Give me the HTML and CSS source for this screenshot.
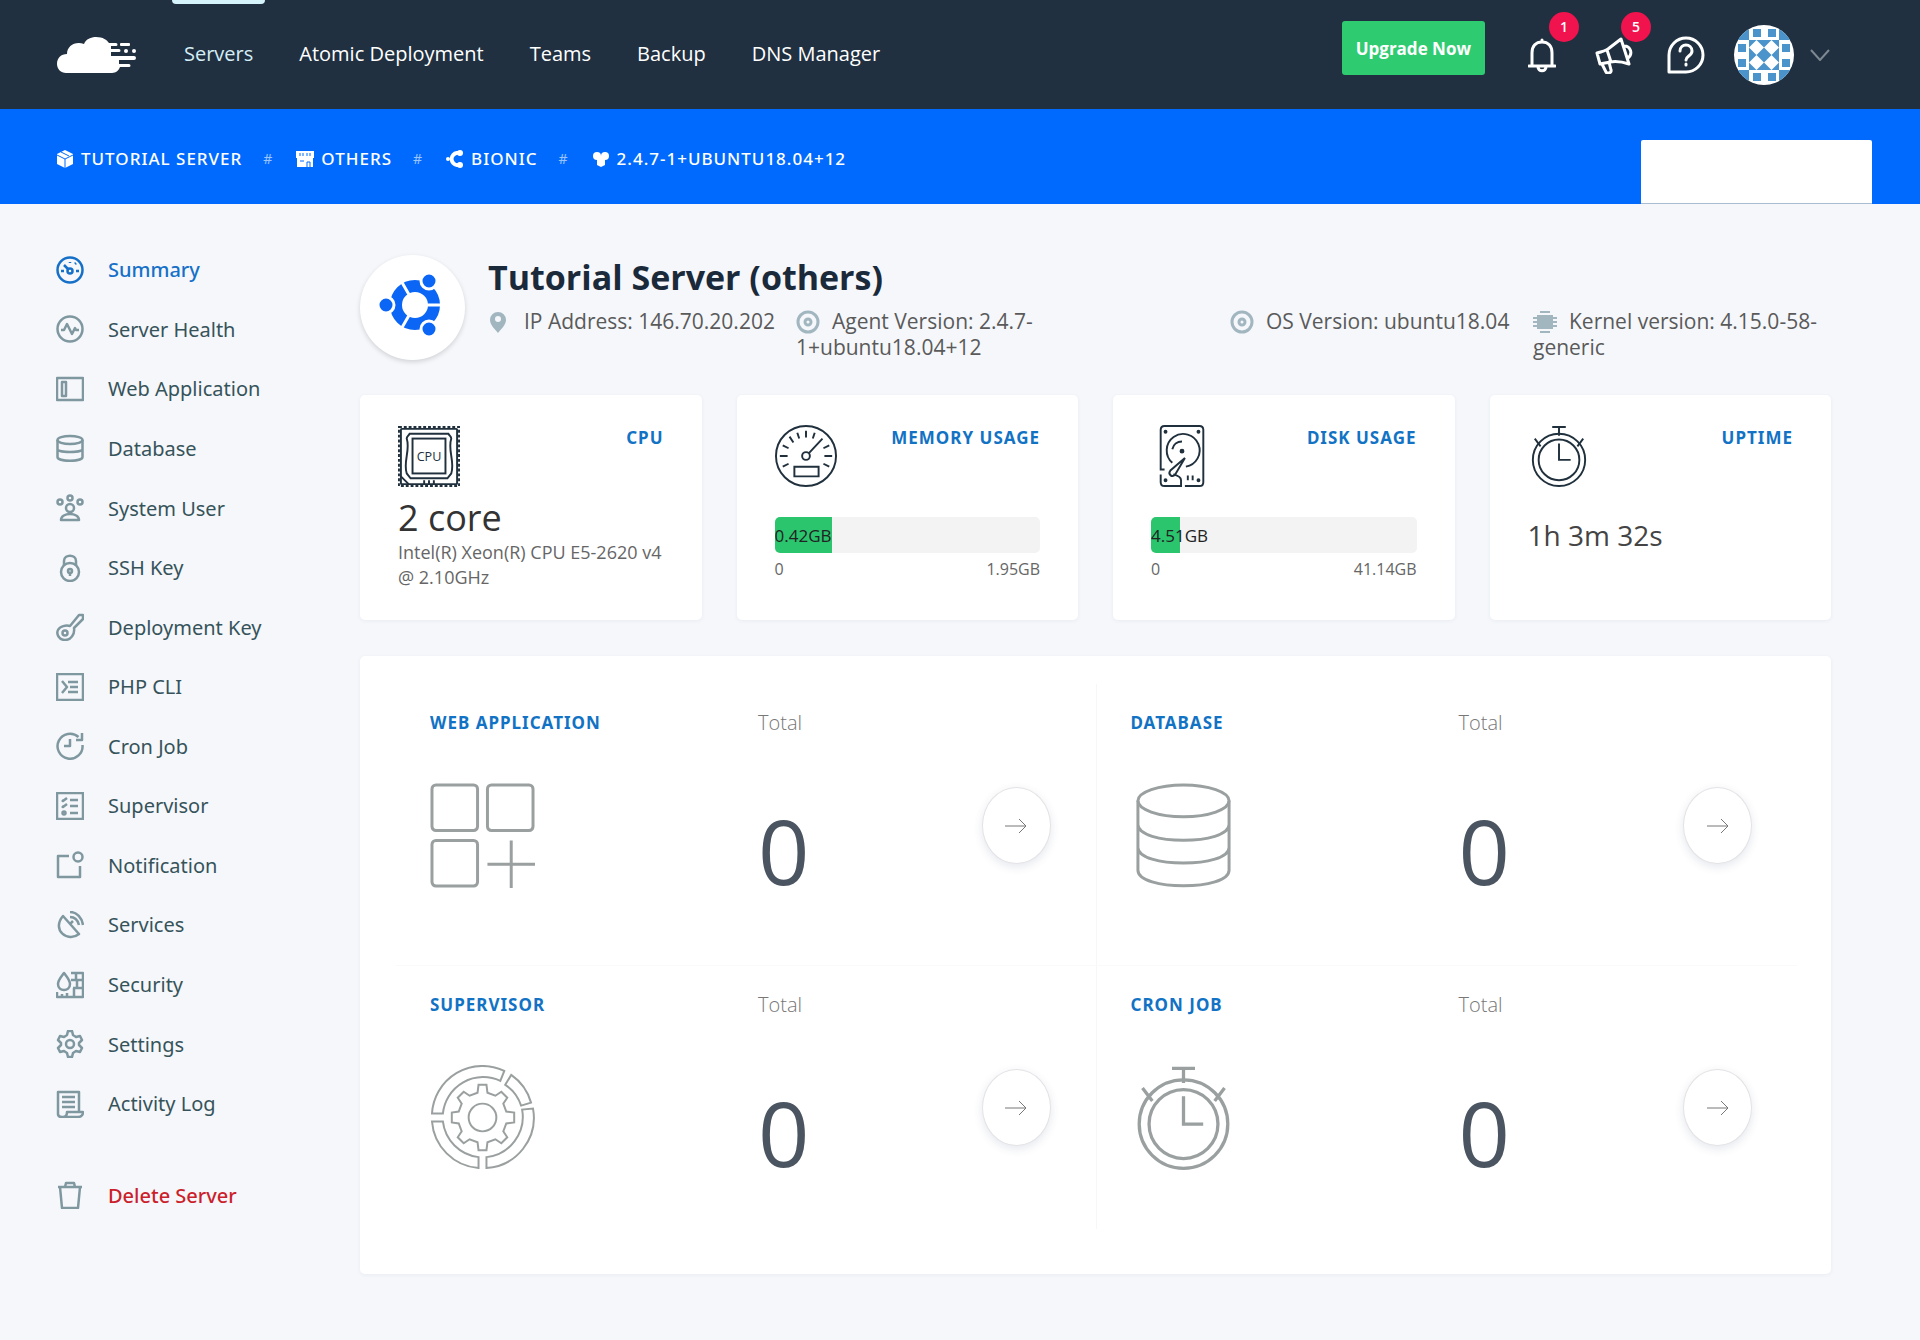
FILE: index.html
```html
<!DOCTYPE html>
<html lang="en">
<head>
<meta charset="utf-8">
<title>Tutorial Server - Summary</title>
<meta name="viewport" content="width=device-width, initial-scale=1">
<link rel="stylesheet" href="styles.css">
</head>
<body>
<svg class="sprite" aria-hidden="true">
  <symbol id="arrow" viewBox="0 0 22 16"><path d="M0 8h20M14 1l7 7-7 7"/></symbol>
  <symbol id="stopwatch" viewBox="0 0 64 64"><path d="M25 2h14M32 2v9M7 14l6 8M57 14l-6 8"/><circle cx="32" cy="36" r="27"/><circle cx="32" cy="36" r="21"/><path d="M32 19v17h12"/></symbol>
  <symbol id="disc" viewBox="0 0 24 24"><circle cx="12" cy="12" r="10"/><circle cx="12" cy="12" r="3"/></symbol>
</svg>

<header class="topbar">
  <a class="logo" href="#" aria-label="Home">
    <svg width="80" height="36" viewBox="0 0 80 36"><path d="M9 36C4 36 0 32 0 27c0-6 4-10 10-10 0-8 8-13 17-10C29 2 34 0 39 0c7 0 11 3 13 6h7a1.500 1.500 0 0 1 0 3h-5v3h8a1.500 1.500 0 0 1 0 3h-8v4h23a2 2 0 0 1 0 4H62v4h10a1.500 1.500 0 0 1 0 3h-9c-1 3-4 6-8 6z"/><rect x="63" y="6" width="10" height="3" rx="1"/><circle cx="69" cy="14" r="2"/><circle cx="77" cy="14" r="2"/></svg>
  </a>
  <nav class="mainnav" aria-label="Main">
    <a class="active" href="#">Servers</a>
    <a href="#">Atomic Deployment</a>
    <a href="#">Teams</a>
    <a href="#">Backup</a>
    <a href="#">DNS Manager</a>
  </nav>
  <div class="tools">
    <button class="upgrade" type="button">Upgrade Now</button>
    <button class="tool" type="button" aria-label="Notifications">
      <svg width="28" height="36" viewBox="0 0 28 36"><path d="M4 29V16C4 9 8 5 14 5s10 4 10 11v13M1 29h26M10 30c0 5 8 5 8 0M14 3v2"/></svg>
      <span class="badge">1</span>
    </button>
    <button class="tool" type="button" aria-label="Announcements">
      <svg width="38" height="38" viewBox="0 0 38 38"><path d="M2 17c4-1 8-2 11-4L26 3l8 25c-6-2-13-3-19-2-3 1-6 1-10 2zM12 14l4 12M7 28l4 8c1 2 6 1 5-2l-2-8M29 10c7 0 9 8 4 12"/></svg>
      <span class="badge">5</span>
    </button>
    <button class="tool" type="button" aria-label="Help">
      <svg width="38" height="38" viewBox="0 0 38 38"><path d="M2 36V19A17 17 0 1 1 19 36zM13 15c0-8 12-8 12 0 0 5-6 5-6 9M19 28v1"/></svg>
    </button>
    <button class="account" type="button" aria-label="Account">
      <svg width="60" height="60" viewBox="0 0 60 60"><defs><clipPath id="round"><circle cx="30" cy="30" r="30"/></clipPath></defs><g clip-path="url(#round)"><path fill="#fff" d="M0 0h60v60H0z"/><g fill="#4a94cb"><path d="M0 0h15v15H0zM45 0h15v15H45zM0 45h15v15H0zM45 45h15v15H45z"/><rect x="19" y="4" width="8" height="8"/><rect x="34" y="4" width="8" height="8"/><rect x="19" y="48" width="8" height="8"/><rect x="34" y="48" width="8" height="8"/><rect x="4" y="19" width="8" height="8"/><rect x="4" y="34" width="8" height="8"/><rect x="48" y="19" width="8" height="8"/><rect x="48" y="34" width="8" height="8"/><path d="M15 15h30v30H15z"/></g><path fill="#fff" d="M22.500 15l7.500 7.500-7.500 7.500-7.500-7.500zM37.500 15l7.500 7.500-7.500 7.500-7.500-7.500zM22.500 30l7.500 7.500-7.500 7.500-7.500-7.500zM37.500 30l7.500 7.500-7.500 7.500-7.500-7.500z"/></g></svg>
      <svg class="chevron" width="20" height="12" viewBox="0 0 20 12"><path d="M1 1l9 10 9-10"/></svg>
    </button>
  </div>
</header>

<div class="subbar">
  <ol class="crumbs">
    <li><svg width="18" height="18" viewBox="0 0 18 18"><path d="M9 0l8 4v10l-8 4-8-4V4z"/><path class="cut" d="M1 5l8 4 8-4M9 9v9M5 2l8 4"/></svg><a href="#">TUTORIAL SERVER</a></li>
    <li><svg width="18" height="18" viewBox="0 0 18 18"><path d="M0 1h18v7h-1v9H1V8H0z"/><path class="cut" d="M4 3v3M7 3v3M11 3v3M14 3v3M4 11h4M11 17v-5h3v5"/></svg><a href="#">OTHERS</a></li>
    <li><svg width="18" height="18" viewBox="0 0 18 18"><path class="ring" d="M15 4a6 6 0 1 0 0 10"/><circle cx="2" cy="9" r="2"/><circle cx="14" cy="3" r="3"/><circle cx="14" cy="15" r="3"/></svg><a href="#">BIONIC</a></li>
    <li><svg width="18" height="18" viewBox="0 0 18 18"><circle cx="5" cy="6" r="4"/><circle cx="13" cy="6" r="4"/><path d="M5 6h8v9l-4 2-4-2z"/></svg><a href="#">2.4.7-1+UBUNTU18.04+12</a></li>
  </ol>
  <div class="panel-tab"></div>
</div>

<div class="layout">
  <nav class="sidebar" aria-label="Server">
    <a class="current" href="#"><svg viewBox="0 0 28 28"><circle cx="14" cy="14" r="12.500"/><circle cx="14" cy="15" r="2.500"/><path d="M12 13L8 9M14 6v1M19 8l1-1M5 15h3M20 15h3"/></svg>Summary</a>
    <a href="#"><svg viewBox="0 0 28 28"><circle cx="14" cy="14" r="12.500"/><path d="M5 15h3l3-6 5 10 3-6 1 2h3"/></svg>Server Health</a>
    <a href="#"><svg viewBox="0 0 28 28"><path d="M1 3h26v22H1zM6 7h4v14H6z"/></svg>Web Application</a>
    <a href="#"><svg viewBox="0 0 28 28"><ellipse cx="14" cy="6" rx="12.500" ry="4"/><path d="M1.500 6v17c0 5 25 5 25 0V6M1.500 15c0 4 25 4 25 0"/></svg>Database</a>
    <a href="#"><svg viewBox="0 0 28 28"><circle cx="4" cy="8" r="2.500"/><circle cx="14" cy="4" r="2.500"/><circle cx="24" cy="8" r="2.500"/><circle cx="14" cy="14" r="4"/><path d="M5 26c0-8 18-8 18 0z"/></svg>System User</a>
    <a href="#"><svg viewBox="0 0 28 28"><circle cx="14" cy="18" r="9"/><path d="M8 11V7c0-7 12-7 12 0v4M14 18v4"/><circle cx="14" cy="17" r="2"/></svg>SSH Key</a>
    <a href="#"><svg viewBox="0 0 28 28"><path d="M14 13l9-11h4v4l-9 9c1 6-3 12-9 12s-9-6-7-10 8-5 12-4z"/><circle cx="9" cy="20" r="2.500"/></svg>Deployment Key</a>
    <a href="#"><svg viewBox="0 0 28 28"><path d="M1 1h26v26H1zM6 8l5 6-5 6M12 9h10M14 14h8M12 19h10"/></svg>PHP CLI</a>
    <a href="#"><svg viewBox="0 0 28 28"><path d="M26.500 13a12.500 12.500 0 1 1-4-8M26 1v7h-6M14 7v7H8"/></svg>Cron Job</a>
    <a href="#"><svg viewBox="0 0 28 28"><path d="M1 1h26v26H1zM6 8l1 1 4-3M14 8h8M6 14l1 1 4-3M14 14h8M14 21h8"/><circle cx="8" cy="21" r="1.500"/></svg>Supervisor</a>
    <a href="#"><svg viewBox="0 0 28 28"><path d="M13 5H2v21h22V15"/><circle cx="22" cy="6" r="4.500"/></svg>Notification</a>
    <a href="#"><svg viewBox="0 0 28 28"><path d="M7 5l16 18C12 32-5 19 7 5zM14 13l3-3M14 1c7 0 12 6 13 13M14 6c5 0 8 4 9 8"/></svg>Services</a>
    <a href="#"><svg viewBox="0 0 28 28"><path d="M8 2c3 4 6 7 6 11s-3 6-6 6-6-2-6-6 3-7 6-11zM15 2h12v24H1v-5M15 9h12M20 2v7M17 17h10M21 9v8M11 26v-4M18 26v-9M6 26v-3"/></svg>Security</a>
    <a href="#"><svg viewBox="0 0 28 28"><path d="M11 5l1-4h4l1 4 3 2 4-1 2 4-3 3v2l3 3-2 4-4-1-3 2-1 4h-4l-1-4-3-2-4 1-2-4 3-3v-2L2 10l2-4 4 1z"/><circle cx="14" cy="14" r="4"/></svg>Settings</a>
    <a href="#"><svg viewBox="0 0 28 28"><path d="M23 21V2H2v22c0 2 2 3 4 3h16c3 0 5-2 5-5H11c0 3-1 5-4 5M6 7h13M6 12h13M6 17h13"/></svg>Activity Log</a>
    <a class="danger" href="#"><svg viewBox="0 0 28 28"><path d="M2 6h24M9 6l1-4h8l1 4M4 6l2 21h16l2-21"/></svg>Delete Server</a>
  </nav>

  <main class="content">
    <section class="hero">
      <div class="distro">
        <svg width="72" height="72" viewBox="0 -1 72 72"><circle cx="38" cy="32" r="19" stroke="#0c66f5" stroke-width="12"/><g stroke="#fff" stroke-width="3"><path d="M38 32h28M38 32L23 6M38 32L23 58"/></g><g fill="#0c66f5" stroke="#fff" stroke-width="3"><circle cx="9" cy="32" r="8"/><circle cx="52" cy="8" r="8"/><circle cx="52" cy="56" r="8"/></g></svg>
      </div>
      <div>
        <h1>Tutorial Server (others)</h1>
        <ul class="facts">
          <li><svg class="pin" width="24" height="24" viewBox="0 0 24 24"><path d="M10 2a8 8 0 0 1 8 8c0 5-5 9-8 13-3-4-8-8-8-13a8 8 0 0 1 8-8z"/><circle cx="10" cy="9" r="3"/></svg>IP Address: 146.70.20.202</li>
          <li><svg class="disc" width="24" height="24"><use href="#disc"/></svg>Agent Version: 2.4.7-1+ubuntu18.04+12</li>
          <li><svg class="disc" width="24" height="24"><use href="#disc"/></svg>OS Version: ubuntu18.04</li>
          <li><svg class="chip" width="24" height="24" viewBox="0 0 24 24"><path d="M4 5h16v14H4z"/><path class="pins" d="M0 8h24M0 12h24M0 16h24M7 2h10M7 22h10"/></svg>Kernel version: 4.15.0-58-generic</li>
        </ul>
      </div>
    </section>

    <section class="stats">
      <article class="card">
        <header><svg width="62" height="62" viewBox="0 0 64 64"><rect x="3" y="4" width="58" height="57" rx="1"/><rect x="1" y="2" width="62" height="61" stroke-dasharray="3 2"/><path d="M12 9h40c1 2 3 3 3 5-4 12 4 24 0 36l-4 5H13l-4-5c-4-12 4-24 0-36 0-2 2-3 3-5z"/><rect x="15" y="14" width="34" height="36"/><path d="M27 57v4M32 57v4M37 57v4M3 53l8 8"/><text x="32" y="37">CPU</text></svg><h2>CPU</h2></header>
        <p class="cores">2 core</p>
        <p class="model">Intel(R) Xeon(R) CPU E5-2620 v4 @ 2.10GHz</p>
      </article>
      <article class="card">
        <header><svg width="62" height="62" viewBox="0 0 64 64"><circle cx="32" cy="32" r="31"/><circle cx="32" cy="32" r="4"/><path d="M35 29l14-15M20 43h25v10H20zM5 32h8M51 32h8M8 21l6 3M56 21l-6 3M15 12l4 6M23 8l2 6M32 6v7M41 8l-2 6M8 43l6-3M56 43l-6-3"/></svg><h2>MEMORY USAGE</h2></header>
        <div class="bar"><div class="fill" style="width:21.5%"></div><span>0.42GB</span></div>
        <div class="scale"><span>0</span><span>1.95GB</span></div>
      </article>
      <article class="card">
        <header><svg width="62" height="62" viewBox="0 0 64 64"><path d="M14 46h-4V5c0-2 1-4 4-4h36c3 0 4 2 4 4v54c0 3-1 4-4 4H35M10 51v8c0 3 1 4 4 4h17v-6c0-3-4-5-8-6M22 39a17 17 0 1 1 14 4M22 25c1-5 5-8 10-8M35 34L20 47c-3 4 2 8 5 4zM38 52v5M43 52v5"/><g fill="#20303d"><circle cx="32" cy="27" r="1.500"/><circle cx="15" cy="7" r="1"/><circle cx="49" cy="7" r="1"/><circle cx="15" cy="57" r="1"/><circle cx="49" cy="57" r="1"/></g></svg><h2>DISK USAGE</h2></header>
        <div class="bar"><div class="fill" style="width:11%"></div><span>4.51GB</span></div>
        <div class="scale"><span>0</span><span>41.14GB</span></div>
      </article>
      <article class="card">
        <header><svg width="62" height="62"><use href="#stopwatch"/></svg><h2>UPTIME</h2></header>
        <p class="uptime">1h 3m 32s</p>
      </article>
    </section>

    <section class="totals">
      <article>
        <h2>WEB APPLICATION</h2><p class="label">Total</p>
        <svg class="big" viewBox="0 0 106 106"><rect x="2" y="2" width="46" height="46" rx="4"/><rect x="58" y="2" width="46" height="46" rx="4"/><rect x="2" y="58" width="46" height="46" rx="4"/><path d="M58 82h48M82 58v48"/></svg>
        <p class="count">0</p>
        <a class="go" href="#" aria-label="Open web applications"><svg width="22" height="16"><use href="#arrow"/></svg></a>
      </article>
      <article>
        <h2>DATABASE</h2><p class="label">Total</p>
        <svg class="big" viewBox="0 0 106 106"><ellipse cx="53" cy="18" rx="46" ry="16"/><path d="M7 18v70c0 21 92 21 92 0V18M7 42c0 21 92 21 92 0M7 65c0 21 92 21 92 0"/></svg>
        <p class="count">0</p>
        <a class="go" href="#" aria-label="Open databases"><svg width="22" height="16"><use href="#arrow"/></svg></a>
      </article>
      <article>
        <h2>SUPERVISOR</h2><p class="label">Total</p>
        <svg class="big thin" viewBox="0 0 106 106"><path d="M2 49A51 51 0 0 1 75 6l-4 10A41 41 0 0 0 13 49zM82 10a51 51 0 0 1 20 28l-10 3a41 41 0 0 0-16-21zM104 44a51 51 0 0 1-47 60V93a41 41 0 0 0 36-48zM49 104A51 51 0 0 1 2 57h11a41 41 0 0 0 36 36z"/><circle cx="53" cy="53" r="14"/><path d="M48 28l1-8h8l1 8 8 3 6-4 6 6-4 6 3 8 8 1v10l-8 1-3 8 4 6-6 6-6-4-8 3-1 8h-8l-1-8-8-3-6 4-6-6 4-6-3-8-7-1V48l7-1 3-8-4-6 6-6 6 4z"/></svg>
        <p class="count">0</p>
        <a class="go" href="#" aria-label="Open supervisor"><svg width="22" height="16"><use href="#arrow"/></svg></a>
      </article>
      <article>
        <h2>CRON JOB</h2><p class="label">Total</p>
        <svg class="big watch"><use href="#stopwatch"/></svg>
        <p class="count">0</p>
        <a class="go" href="#" aria-label="Open cron jobs"><svg width="22" height="16"><use href="#arrow"/></svg></a>
      </article>
    </section>
  </main>
</div>
</body>
</html>
```
FILE: styles.css
```css
* { box-sizing: border-box; }
body { margin: 0; min-height: 100vh; background: #f5f7fb; color: #444; font-family: "Open Sans", "Noto Sans", sans-serif; font-size: 17px; }
h1, h2, p, ul, ol { margin: 0; padding: 0; }
ul, ol { list-style: none; }
a { color: inherit; text-decoration: none; }
button { border: 0; background: none; padding: 0; font: inherit; color: inherit; }
svg { display: block; fill: none; flex: none; }
.sprite { display: none; }

.topbar { display: flex; align-items: center; height: 109px; padding: 0 90px 0 57px; background: #203040; color: #fff; }
.logo { margin-right: 35px; }
.logo svg { fill: #fff; }
.mainnav { display: flex; align-self: stretch; gap: 22px; }
.mainnav a { display: flex; align-items: center; padding: 0 12px 2px; font-size: 20px; }
.mainnav a.active { position: relative; color: #d5eef6; }
.mainnav a.active::before { content: ""; position: absolute; left: 0; right: 0; top: 0; height: 4px; border-radius: 0 0 4px 4px; background: #d5f3fa; }
.tools { display: flex; align-items: center; margin-left: auto; }
.upgrade { height: 54px; padding: 0 14px; margin: 0 38px 13px 0; border-radius: 3px; background: #2fcb71; color: #fff; font-weight: 700; }
.tool { position: relative; display: grid; place-items: center; width: 38px; height: 38px; margin-right: 34px; }
.tool:nth-of-type(4) { margin-right: 29px; }
.tool svg { stroke: #fff; stroke-width: 3; stroke-linejoin: round; stroke-linecap: round; }
.badge { position: absolute; left: 26px; top: -24px; width: 30px; height: 30px; border-radius: 50%; background: #f0134d; font-size: 14px; font-weight: 600; line-height: 30px; }
.account { display: flex; align-items: center; gap: 16px; }
.chevron { stroke: #7d8891; stroke-width: 2; }

.subbar { display: flex; align-items: flex-end; justify-content: space-between; height: 95px; padding: 0 48px 0 56px; background: #006aff; color: #fff; }
.crumbs { display: flex; align-self: center; padding-top: 4px; font-family: "Noto Sans", "Open Sans", sans-serif; }
.crumbs li { display: flex; align-items: center; gap: 7px; letter-spacing: 1px; font-weight: 500; }
.crumbs li + li::before { content: "#"; margin: 0 16px 0 21px; font-size: 14px; font-weight: 400; opacity: .6; }
.crumbs svg { fill: #fff; }
.crumbs .cut { fill: none; stroke: #006aff; stroke-width: 1; }
.crumbs .ring { fill: none; stroke: #fff; stroke-width: 4; }
.panel-tab { width: 231px; height: 64px; background: #fff; border-radius: 2px 2px 0 0; border-bottom: 1px solid #a9bcd0; }

.layout { display: grid; grid-template-columns: 304px minmax(0, 1fr); padding: 36px 89px 64px 56px; }
.sidebar { display: flex; flex-direction: column; padding-bottom: 49px; }
.sidebar a { flex: 1; display: flex; align-items: center; gap: 24px; font-family: "Noto Sans", "Open Sans", sans-serif; font-size: 20px; color: #36535a; }
.sidebar svg { width: 28px; height: 28px; stroke: #7f979f; stroke-width: 2.5; stroke-linejoin: round; }
.sidebar .current { color: #1670c8; font-weight: 500; }
.sidebar .current svg { stroke: #1670c8; }
.sidebar .danger { margin-top: 32px; color: #cb1f2c; font-weight: 500; }

.hero { display: flex; gap: 23px; padding-top: 15px; height: 155px; }
.hero > div:last-child { flex: 1; }
.distro { display: grid; place-items: center; width: 105px; height: 105px; border-radius: 50%; background: #fff; box-shadow: 0 2px 5px rgba(0, 0, 0, .15); }
h1 { font-size: 34px; line-height: 44px; font-weight: 700; color: #1b2a3a; }
.facts { display: grid; grid-template-columns: 308px 1fr 303px 298px; margin-top: 9px; font-size: 21px; line-height: 26px; color: #5a5a5a; }
.facts li { max-width: 300px; }
.facts svg { display: inline-block; vertical-align: -5px; margin-right: 12px; }
.pin { fill: #a2b6c0; }
.pin circle { fill: #f5f7fb; }
.disc { stroke: #a2b6c0; stroke-width: 3; }
.chip { fill: #a2b6c0; }
.pins { stroke: #a2b6c0; stroke-width: 2; }

.stats { display: grid; grid-template-columns: repeat(4, 1fr); gap: 35px; }
.card { height: 225px; padding: 30px 38px 0; background: #fff; border-radius: 5px; box-shadow: 0 1px 4px rgba(30, 50, 90, .06); }
.card header { display: flex; justify-content: space-between; }
.card header svg { stroke: #20303d; stroke-width: 2; }
.card header text { fill: #20303d; stroke: none; font-size: 13px; text-anchor: middle; }
h2 { font-family: "Noto Sans", "Open Sans", sans-serif; font-size: 17px; line-height: 26px; font-weight: 700; letter-spacing: 1px; color: #1272c4; }
.cores { margin-top: 10px; font-size: 36px; line-height: 42px; color: #333; }
.model { margin-top: 1px; font-size: 18px; line-height: 25px; color: #666; }
.uptime { margin-top: 30px; font-size: 28px; line-height: 36px; color: #444; }
.bar { position: relative; height: 36px; margin-top: 30px; border-radius: 5px; overflow: hidden; background: #f3f3f3; }
.fill { height: 100%; background: #2bc56e; }
.bar span { position: absolute; left: 0; top: 0; line-height: 37px; font-size: 17px; color: #222; }
.scale { display: flex; justify-content: space-between; font-size: 16px; line-height: 32px; color: #666; }

.totals { display: grid; grid-template-columns: 1fr 1fr; margin-top: 36px; padding: 28px 34px 45px 36px; background: #fff; border-radius: 5px; box-shadow: 0 1px 4px rgba(30, 50, 90, .06); }
.totals article { display: grid; grid-template-columns: 328px 1fr 69px; align-content: start; align-items: start; row-gap: 47px; height: 282px; padding: 26px 45px 0 34px; border-bottom: 1px solid #fafafa; }
.totals article:nth-child(odd) { border-right: 1px solid #f7f7f7; }
.totals article:nth-child(n+3) { height: 263px; border-bottom: 0; }
.label { grid-column: 2 / 4; font-size: 20px; line-height: 26px; color: #777; font-weight: 300; }
.big { width: 105px; height: 105px; stroke: #9a9f9f; stroke-width: 3; }
.big.thin { stroke-width: 2; }
.big.watch { stroke-width: 2; }
.count { font-size: 90px; line-height: 134px; color: #4a5561; }
.go { display: grid; place-items: center; margin-top: 4px; width: 69px; height: 77px; border: 1px solid #e3e3e6; border-radius: 50%; background: #fff; box-shadow: 0 3px 10px rgba(40, 60, 110, .12); }
.go svg { stroke: #777; stroke-width: 1; }
```
